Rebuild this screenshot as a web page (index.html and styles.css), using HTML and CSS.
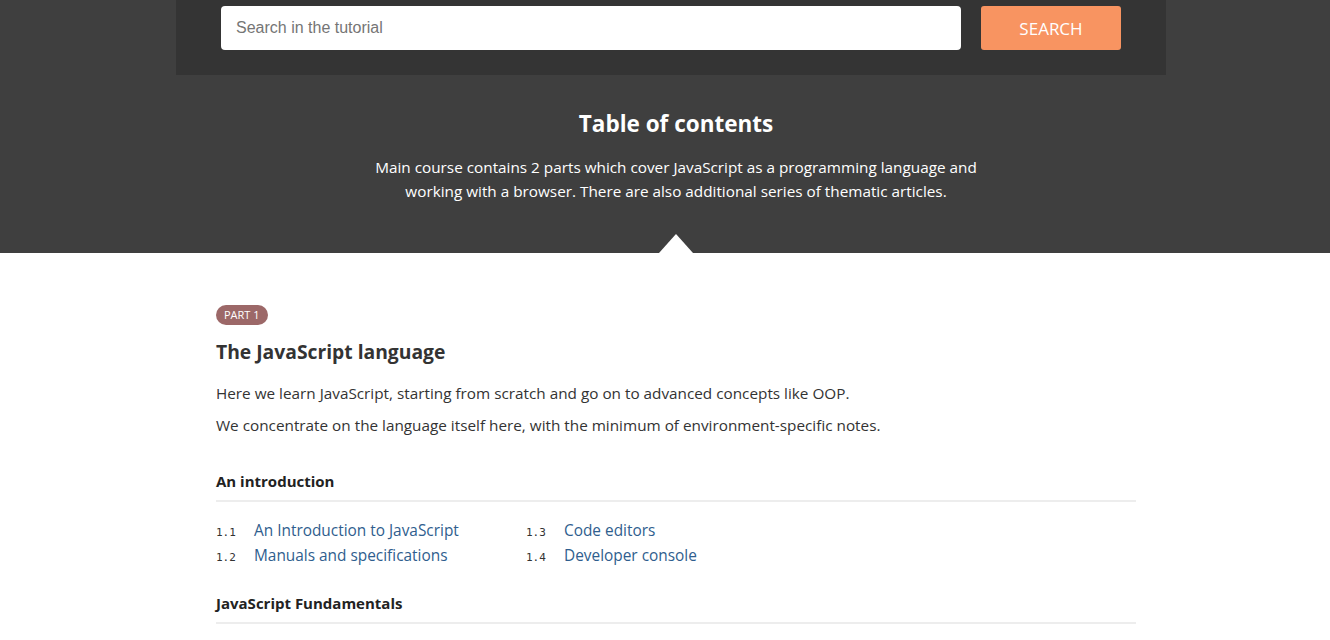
FILE: index.html
```html
<!DOCTYPE html>
<html lang="en">
<head>
<meta charset="utf-8">
<title>Table of contents</title>
<link rel="stylesheet" href="styles.css">
</head>
<body>
<header class="header">
  <form class="search">
    <input class="search-input" type="text" placeholder="Search in the tutorial">
    <button class="search-btn" type="button">Search</button>
  </form>
  <div class="intro">
    <h1 class="intro-title">Table of contents</h1>
    <p class="intro-text">Main course contains 2 parts which cover JavaScript as a programming language and working with a browser. There are also additional series of thematic articles.</p>
  </div>
</header>
<main class="content">
  <span class="badge">PART 1</span>
  <h2 class="part-title">The JavaScript language</h2>
  <p class="part-text">Here we learn JavaScript, starting from scratch and go on to advanced concepts like OOP.</p>
  <p class="part-text">We concentrate on the language itself here, with the minimum of environment-specific notes.</p>

  <section class="chapter">
    <h3 class="chapter-title">An introduction</h3>
    <ol class="lessons">
      <li class="lesson"><span class="num">1.1</span><a href="#">An Introduction to JavaScript</a></li>
      <li class="lesson"><span class="num">1.2</span><a href="#">Manuals and specifications</a></li>
      <li class="lesson"><span class="num">1.3</span><a href="#">Code editors</a></li>
      <li class="lesson"><span class="num">1.4</span><a href="#">Developer console</a></li>
    </ol>
  </section>
  <section class="chapter">
    <h3 class="chapter-title">JavaScript Fundamentals</h3>
  </section>
</main>
</body>
</html>
```
FILE: styles.css
```css
* { box-sizing: border-box; }
html, body { margin: 0; padding: 0; }
body {
  background: #fff;
  font-family: "Open Sans", "Noto Sans", sans-serif;
  color: #333;
}
.header {
  background: #3f3f3f;
  padding-bottom: 50px;
}
.search {
  width: 990px;
  margin: 0 0 0 176px;
  background: #343434;
  padding: 6px 45px 25px;
  display: flex;
  gap: 20px;
}
.search-input {
  flex: 1;
  height: 44px;
  border: none;
  border-radius: 4px;
  padding: 0 15px;
  font: 16px "Liberation Sans", Arial, sans-serif;
  color: #333;
  background: #fff;
  outline: none;
}
.search-input::placeholder { color: #757575; }
.search-btn {
  width: 140px;
  height: 44px;
  border: none;
  border-radius: 3px;
  background: #f89461;
  color: #fff;
  font-family: "Open Sans", "Noto Sans", sans-serif;
  font-size: 17px;
  text-transform: uppercase;
  padding: 0;
}
.intro {
  width: 920px;
  margin: 0 0 0 216px;
  text-align: center;
  position: relative;
  height: 128px;
  padding-top: 34px;
}
.intro::after {
  content: "";
  position: absolute;
  left: 443px;
  bottom: -50px;
  border-left: 17px solid transparent;
  border-right: 17px solid transparent;
  border-bottom: 19px solid #fff;
}
.intro-title {
  margin: 0;
  font-size: 22.5px;
  line-height: 30px;
  font-weight: 700;
  color: #fff;
}
.intro-text {
  margin: 16px auto 0;
  width: 640px;
  font-size: 15.3px;
  line-height: 24px;
  color: #fff;
}
.content {
  width: 920px;
  margin: 0 0 0 216px;
  padding-top: 49px;
}
.badge {
  display: inline-block;
  height: 20px;
  line-height: 20px;
  padding: 0 8px;
  border-radius: 10px;
  background: #9c6868;
  color: #fff;
  font-size: 11px;
}
.part-title {
  margin: 14px 0 0;
  font-size: 19.3px;
  line-height: 26px;
  font-weight: 700;
  color: #333;
}
.part-text {
  margin: 16px 0 0;
  font-size: 15.3px;
  line-height: 24px;
}
.part-text + .part-text { margin-top: 8px; }
.chapter { margin-top: 33px; }
.chapter + .chapter { margin-top: 24px; }
.chapter-title {
  margin: 0;
  font-size: 15px;
  line-height: 22px;
  font-weight: 700;
  color: #222;
  padding-bottom: 8px;
  border-bottom: 2px solid #ededed;
}
.lessons {
  list-style: none;
  margin: 16px 0 0;
  padding: 0;
  display: grid;
  grid-template-columns: 310px 310px;
  grid-template-rows: 25px 25px;
  grid-auto-flow: column;
}
.lesson {
  display: flex;
  align-items: baseline;
  line-height: 25px;
  font-size: 15.4px;
}
.num {
  width: 38px;
  flex: none;
  font: 11px "DejaVu Sans Mono", "Liberation Mono", monospace;
  color: #333;
}
.lesson a {
  color: #2f5e8e;
  text-decoration: none;
}
```
